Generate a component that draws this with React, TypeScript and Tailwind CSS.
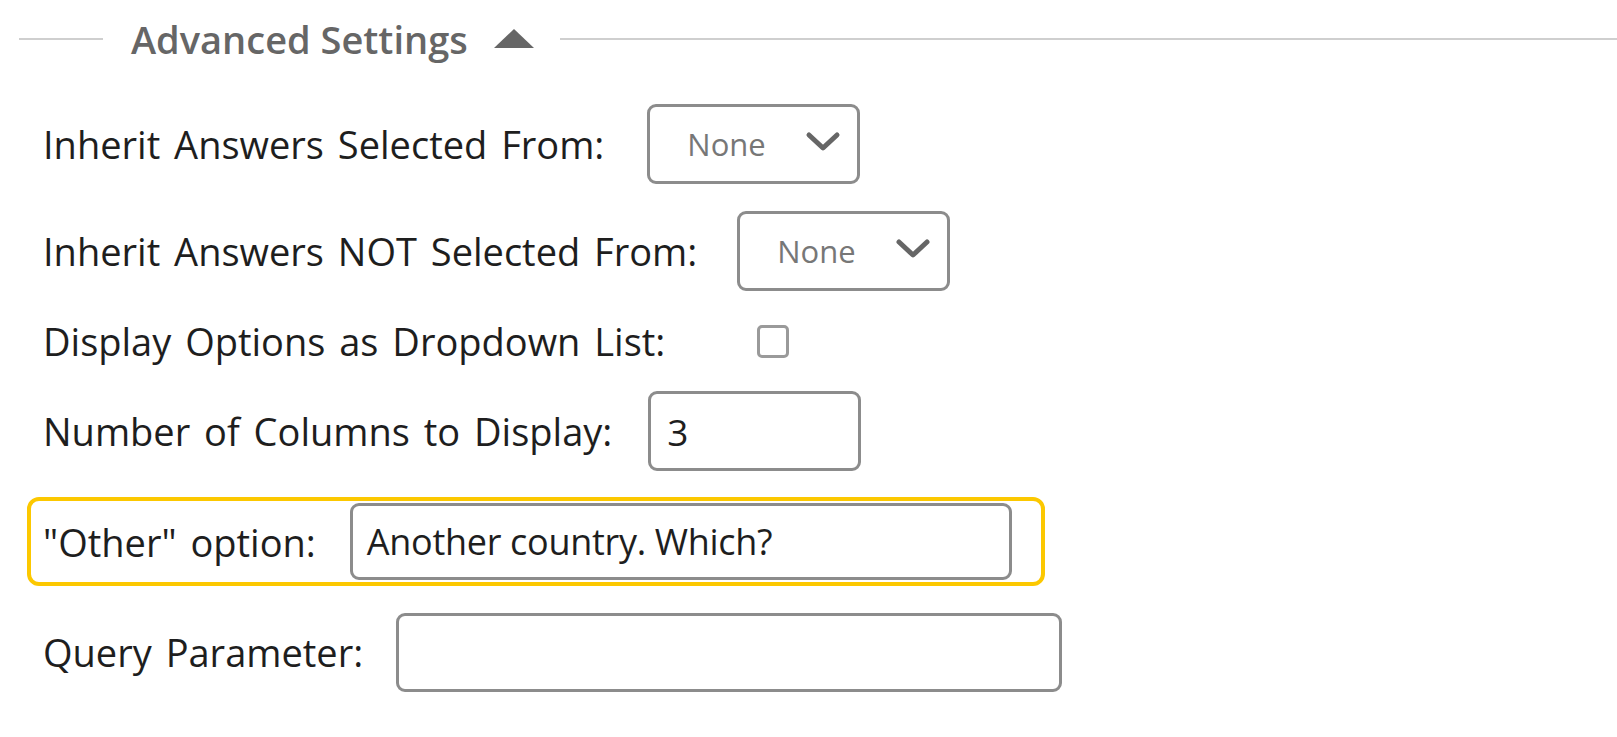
const font = { fontFamily: '"Open Sans", "Liberation Sans", sans-serif' };

function Select({ value }: { value: string }) {
  return (
    <div className="w-[213px] h-[80px] border-[3px] border-[#8c8c8c] rounded-[9px] bg-white flex items-center pl-[37px] pr-[16px] justify-between">
      <span className="text-[31px] text-[#777]">{value}</span>
      <svg width="36" height="22" viewBox="0 0 36 22" className="mb-[4px]">
        <polyline points="4,4 18,17 32,4" fill="none" stroke="#666" strokeWidth="5" strokeLinecap="round" strokeLinejoin="round" />
      </svg>
    </div>
  );
}

export default function App() {
  return (
    <div className="w-[1617px] h-[737px] bg-white text-[#1e1e1e] overflow-hidden" style={font}>
      {/* section header */}
      <div className="flex items-center pt-[16px] h-[62px]">
        <div className="w-[84px] h-[2px] bg-[#cfcfcf] ml-[19px]" />
        <span className="ml-[28px] text-[38px] font-semibold text-[#666] leading-none">Advanced Settings</span>
        <svg className="ml-[26px]" width="40" height="20" viewBox="0 0 40 20">
          <polygon points="20,0 40,19 0,19" fill="#666" />
        </svg>
        <div className="flex-1 h-[2px] bg-[#cfcfcf] ml-[26px]" />
      </div>

      <div className="flex flex-col pl-[43px] text-[38px] leading-none [word-spacing:4px]">
        <div className="flex items-center mt-[42px] h-[80px]">
          <span className="mr-[43px]">Inherit Answers Selected From:</span>
          <Select value="None" />
        </div>

        <div className="flex items-center mt-[27px] h-[80px]">
          <span className="mr-[40px]">Inherit Answers NOT Selected From:</span>
          <Select value="None" />
        </div>

        <div className="flex items-center mt-[20px] h-[60px]">
          <span className="mr-[92px]">Display Options as Dropdown List:</span>
          <div className="w-[32px] h-[33px] border-[3px] border-[#9a9a9a] rounded-[5px] bg-white" />
        </div>

        <div className="flex items-center mt-[20px] h-[80px]">
          <span className="mr-[36px]">Number of Columns to Display:</span>
          <div className="w-[213px] h-[80px] border-[3px] border-[#8c8c8c] rounded-[9px] bg-white flex items-center pl-[16px] text-[37px]">
            3
          </div>
        </div>

        <div className="-ml-[16px] mt-[26px] w-[1018px] h-[89px] border-[4px] border-[#fcc800] rounded-[12px] flex items-center pl-[12px]">
          <span className="mr-[34px]">"Other" option:</span>
          <div className="w-[662px] h-[77px] border-[3px] border-[#8c8c8c] rounded-[9px] bg-white flex items-center pl-[14px] text-[36px] tracking-[-0.3px] [word-spacing:0px]">
            Another country. Which?
          </div>
        </div>

        <div className="flex items-center mt-[26px] h-[80px]">
          <span className="mr-[33px]">Query Parameter:</span>
          <div className="w-[666px] h-[79px] border-[3px] border-[#8c8c8c] rounded-[9px] bg-white" />
        </div>
      </div>
    </div>
  );
}
